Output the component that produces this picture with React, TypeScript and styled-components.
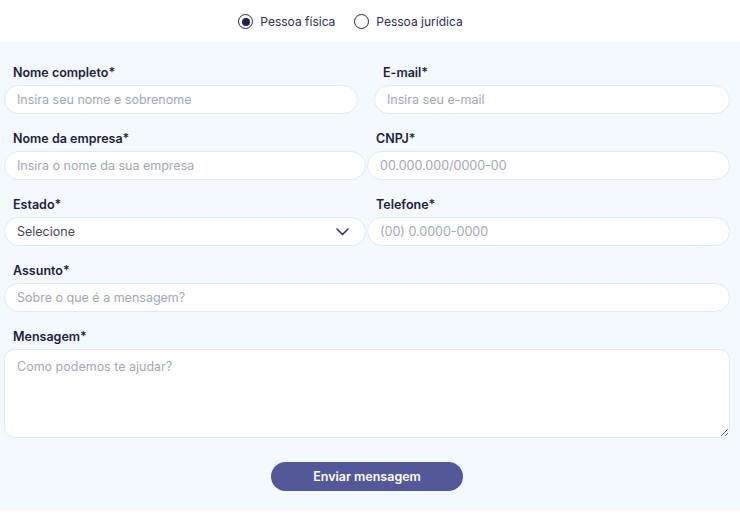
import React from "react";
import styled, { createGlobalStyle } from "styled-components";

const Global = createGlobalStyle`
  html, body { margin: 0; padding: 0; background: #ffffff; }
  body { font-family: Inter, "Open Sans", "Liberation Sans", sans-serif; }
  * { box-sizing: border-box; }
`;

const Page = styled.div`
  width: 740px;
`;

const RadioBar = styled.div`
  height: 42px;
  display: flex;
  align-items: center;
  justify-content: center;
  gap: 19px;
  padding-right: 39px;
  padding-top: 1px;
  background: #ffffff;
`;

const RadioOption = styled.label`
  display: flex;
  align-items: center;
  gap: 7px;
  font-size: 12px;
  color: #2b2d5c;
  cursor: pointer;
`;

const RadioCircle = styled.span<{ $checked?: boolean }>`
  width: 15px;
  height: 15px;
  border-radius: 50%;
  border: 1.5px solid #1f2150;
  display: flex;
  align-items: center;
  justify-content: center;
  &::after {
    content: "";
    width: 8px;
    height: 8px;
    border-radius: 50%;
    background: ${(p) => (p.$checked ? "#1f2150" : "transparent")};
  }
`;

const Panel = styled.form`
  background: #f4f8ff;
  padding: 22px 10px 19px 4px;
  display: flex;
  flex-direction: column;
  gap: 16px;
`;

const Row = styled.div<{ $gap: number; $cols: string }>`
  display: grid;
  grid-template-columns: ${(p) => p.$cols};
  column-gap: ${(p) => p.$gap}px;
`;

const Field = styled.div`
  display: flex;
  flex-direction: column;
  gap: 4px;
`;

const Label = styled.span`
  padding-left: 9px;
  font-size: 12.5px;
  line-height: 17px;
  font-weight: 600;
  color: #1c1d3a;
`;

const Input = styled.input`
  height: 29px;
  width: 100%;
  border: 1px solid #e2e7f6;
  border-radius: 15px;
  background: #ffffff;
  padding: 0 12px;
  font-family: inherit;
  font-size: 12.5px;
  color: #2b2d5c;
  outline: none;
  &::placeholder { color: #a3a6b8; }
`;

const SelectBox = styled.div`
  height: 29px;
  border: 1px solid #e2e7f6;
  border-radius: 15px;
  background: #ffffff;
  padding: 0 16px 0 12px;
  display: flex;
  align-items: center;
  justify-content: space-between;
  font-size: 12.5px;
  color: #44465f;
`;

const TextArea = styled.textarea`
  height: 89px;
  width: 100%;
  border: 1px solid #e2e7f6;
  border-radius: 10px;
  background: #ffffff;
  padding: 9px 12px;
  font-family: inherit;
  font-size: 12.5px;
  color: #2b2d5c;
  outline: none;
  display: block;
  &::placeholder { color: #a3a6b8; }
`;

const ButtonRow = styled.div`
  display: flex;
  justify-content: center;
  margin-top: 8px;
`;

const SubmitButton = styled.button`
  width: 192px;
  height: 29px;
  border: none;
  border-radius: 15px;
  background: #535899;
  color: #ffffff;
  font-family: inherit;
  font-size: 12.5px;
  font-weight: 600;
  cursor: pointer;
`;

const Chevron = () => (
  <svg width="13" height="8" viewBox="0 0 13 8" fill="none">
    <path d="M1 1l5.5 5.5L12 1" stroke="#2b2d5c" strokeWidth="1.5" strokeLinecap="round" strokeLinejoin="round" />
  </svg>
);

export default function App() {
  return (
    <Page>
      <Global />
      <RadioBar>
        <RadioOption>
          <RadioCircle $checked />
          Pessoa física
        </RadioOption>
        <RadioOption>
          <RadioCircle />
          Pessoa jurídica
        </RadioOption>
      </RadioBar>
      <Panel onSubmit={(e) => e.preventDefault()}>
        <Row $gap={16} $cols="354px 356px">
          <Field>
            <Label>Nome completo*</Label>
            <Input placeholder="Insira seu nome e sobrenome" />
          </Field>
          <Field>
            <Label>E-mail*</Label>
            <Input placeholder="Insira seu e-mail" />
          </Field>
        </Row>
        <Row $gap={1} $cols="362px 363px">
          <Field>
            <Label>Nome da empresa*</Label>
            <Input placeholder="Insira o nome da sua empresa" />
          </Field>
          <Field>
            <Label>CNPJ*</Label>
            <Input placeholder="00.000.000/0000-00" />
          </Field>
        </Row>
        <Row $gap={1} $cols="362px 363px">
          <Field>
            <Label>Estado*</Label>
            <SelectBox>
              Selecione
              <Chevron />
            </SelectBox>
          </Field>
          <Field>
            <Label>Telefone*</Label>
            <Input placeholder="(00) 0.0000-0000" />
          </Field>
        </Row>
        <Field>
          <Label>Assunto*</Label>
          <Input placeholder="Sobre o que é a mensagem?" />
        </Field>
        <Field>
          <Label>Mensagem*</Label>
          <TextArea placeholder="Como podemos te ajudar?" />
        </Field>
        <ButtonRow>
          <SubmitButton type="submit">Enviar mensagem</SubmitButton>
        </ButtonRow>
      </Panel>
    </Page>
  );
}
